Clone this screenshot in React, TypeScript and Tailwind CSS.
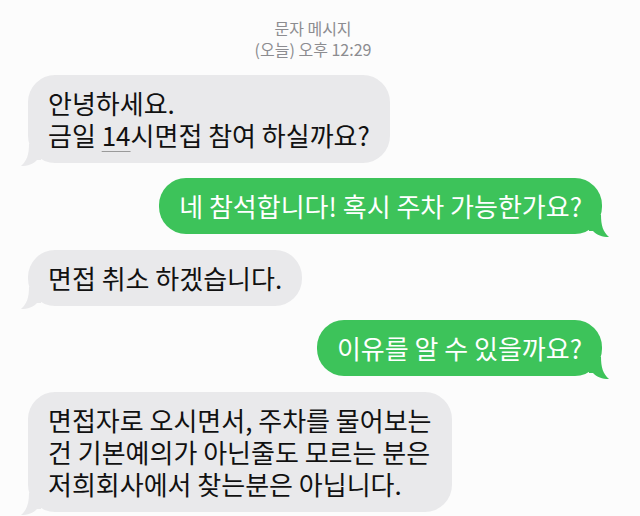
import React from 'react';

type Msg = {
  side: 'in' | 'out';
  lines: React.ReactNode[];
  mt: string;
};

const messages: Msg[] = [
  {
    side: 'in',
    mt: 'mt-[15px]',
    lines: [
      '안녕하세요.',
      <>
        금일 <span className="underline decoration-[#9a9a9a] decoration-1 underline-offset-[5px]">14</span>시면접 참여 하실까요?
      </>,
    ],
  },
  { side: 'out', mt: 'mt-[15px]', lines: ['네 참석합니다! 혹시 주차 가능한가요?'] },
  { side: 'in', mt: 'mt-[16px]', lines: ['면접 취소 하겠습니다.'] },
  { side: 'out', mt: 'mt-[14px]', lines: ['이유를 알 수 있을까요?'] },
  {
    side: 'in',
    mt: 'mt-[16px]',
    lines: [
      '면접자로 오시면서, 주차를 물어보는',
      '건 기본예의가 아닌줄도 모르는 분은',
      '저희회사에서 찾는분은 아닙니다.',
    ],
  },
];

function Tail({ color, flip }: { color: string; flip?: boolean }) {
  return (
    <svg
      width="20"
      height="22"
      viewBox="0 0 20 22"
      className={flip ? 'absolute right-[-7px] bottom-[-3px] -scale-x-100' : 'absolute left-[-7px] bottom-[-3px]'}
    >
      <path d="M8 0 C8 10 6 17 0 22 C7 22 12 20 16 16 L20 16 L20 0 Z" fill={color} />
    </svg>
  );
}

function Bubble({ msg }: { msg: Msg }) {
  const isOut = msg.side === 'out';
  return (
    <div className={`flex ${isOut ? 'justify-end pr-[38px]' : 'justify-start pl-[28px]'} ${msg.mt}`}>
      <div
        className={`relative rounded-[27px] px-[20px] py-[12px] text-[26px] leading-[32px] whitespace-nowrap ${
          isOut ? 'bg-[#3dc35a] text-white' : 'bg-[#e9e9eb] text-[#111111]'
        }`}
      >
        <Tail color={isOut ? '#3dc35a' : '#e9e9eb'} flip={isOut} />
        <div className="relative">
          {msg.lines.map((line, i) => (
            <div key={i}>{line}</div>
          ))}
        </div>
      </div>
    </div>
  );
}

export default function App() {
  return (
    <div className="w-[640px] h-[516px] overflow-hidden bg-[#fcfcfc] font-['Noto_Sans_CJK_KR','Noto_Sans',sans-serif]">
      <div className="pt-[18px] pr-[14px] text-center text-[16px] leading-[21px] text-[#8c8c90]">
        <div>문자 메시지</div>
        <div>(오늘) 오후 12:29</div>
      </div>
      {messages.map((m, i) => (
        <Bubble key={i} msg={m} />
      ))}
    </div>
  );
}
